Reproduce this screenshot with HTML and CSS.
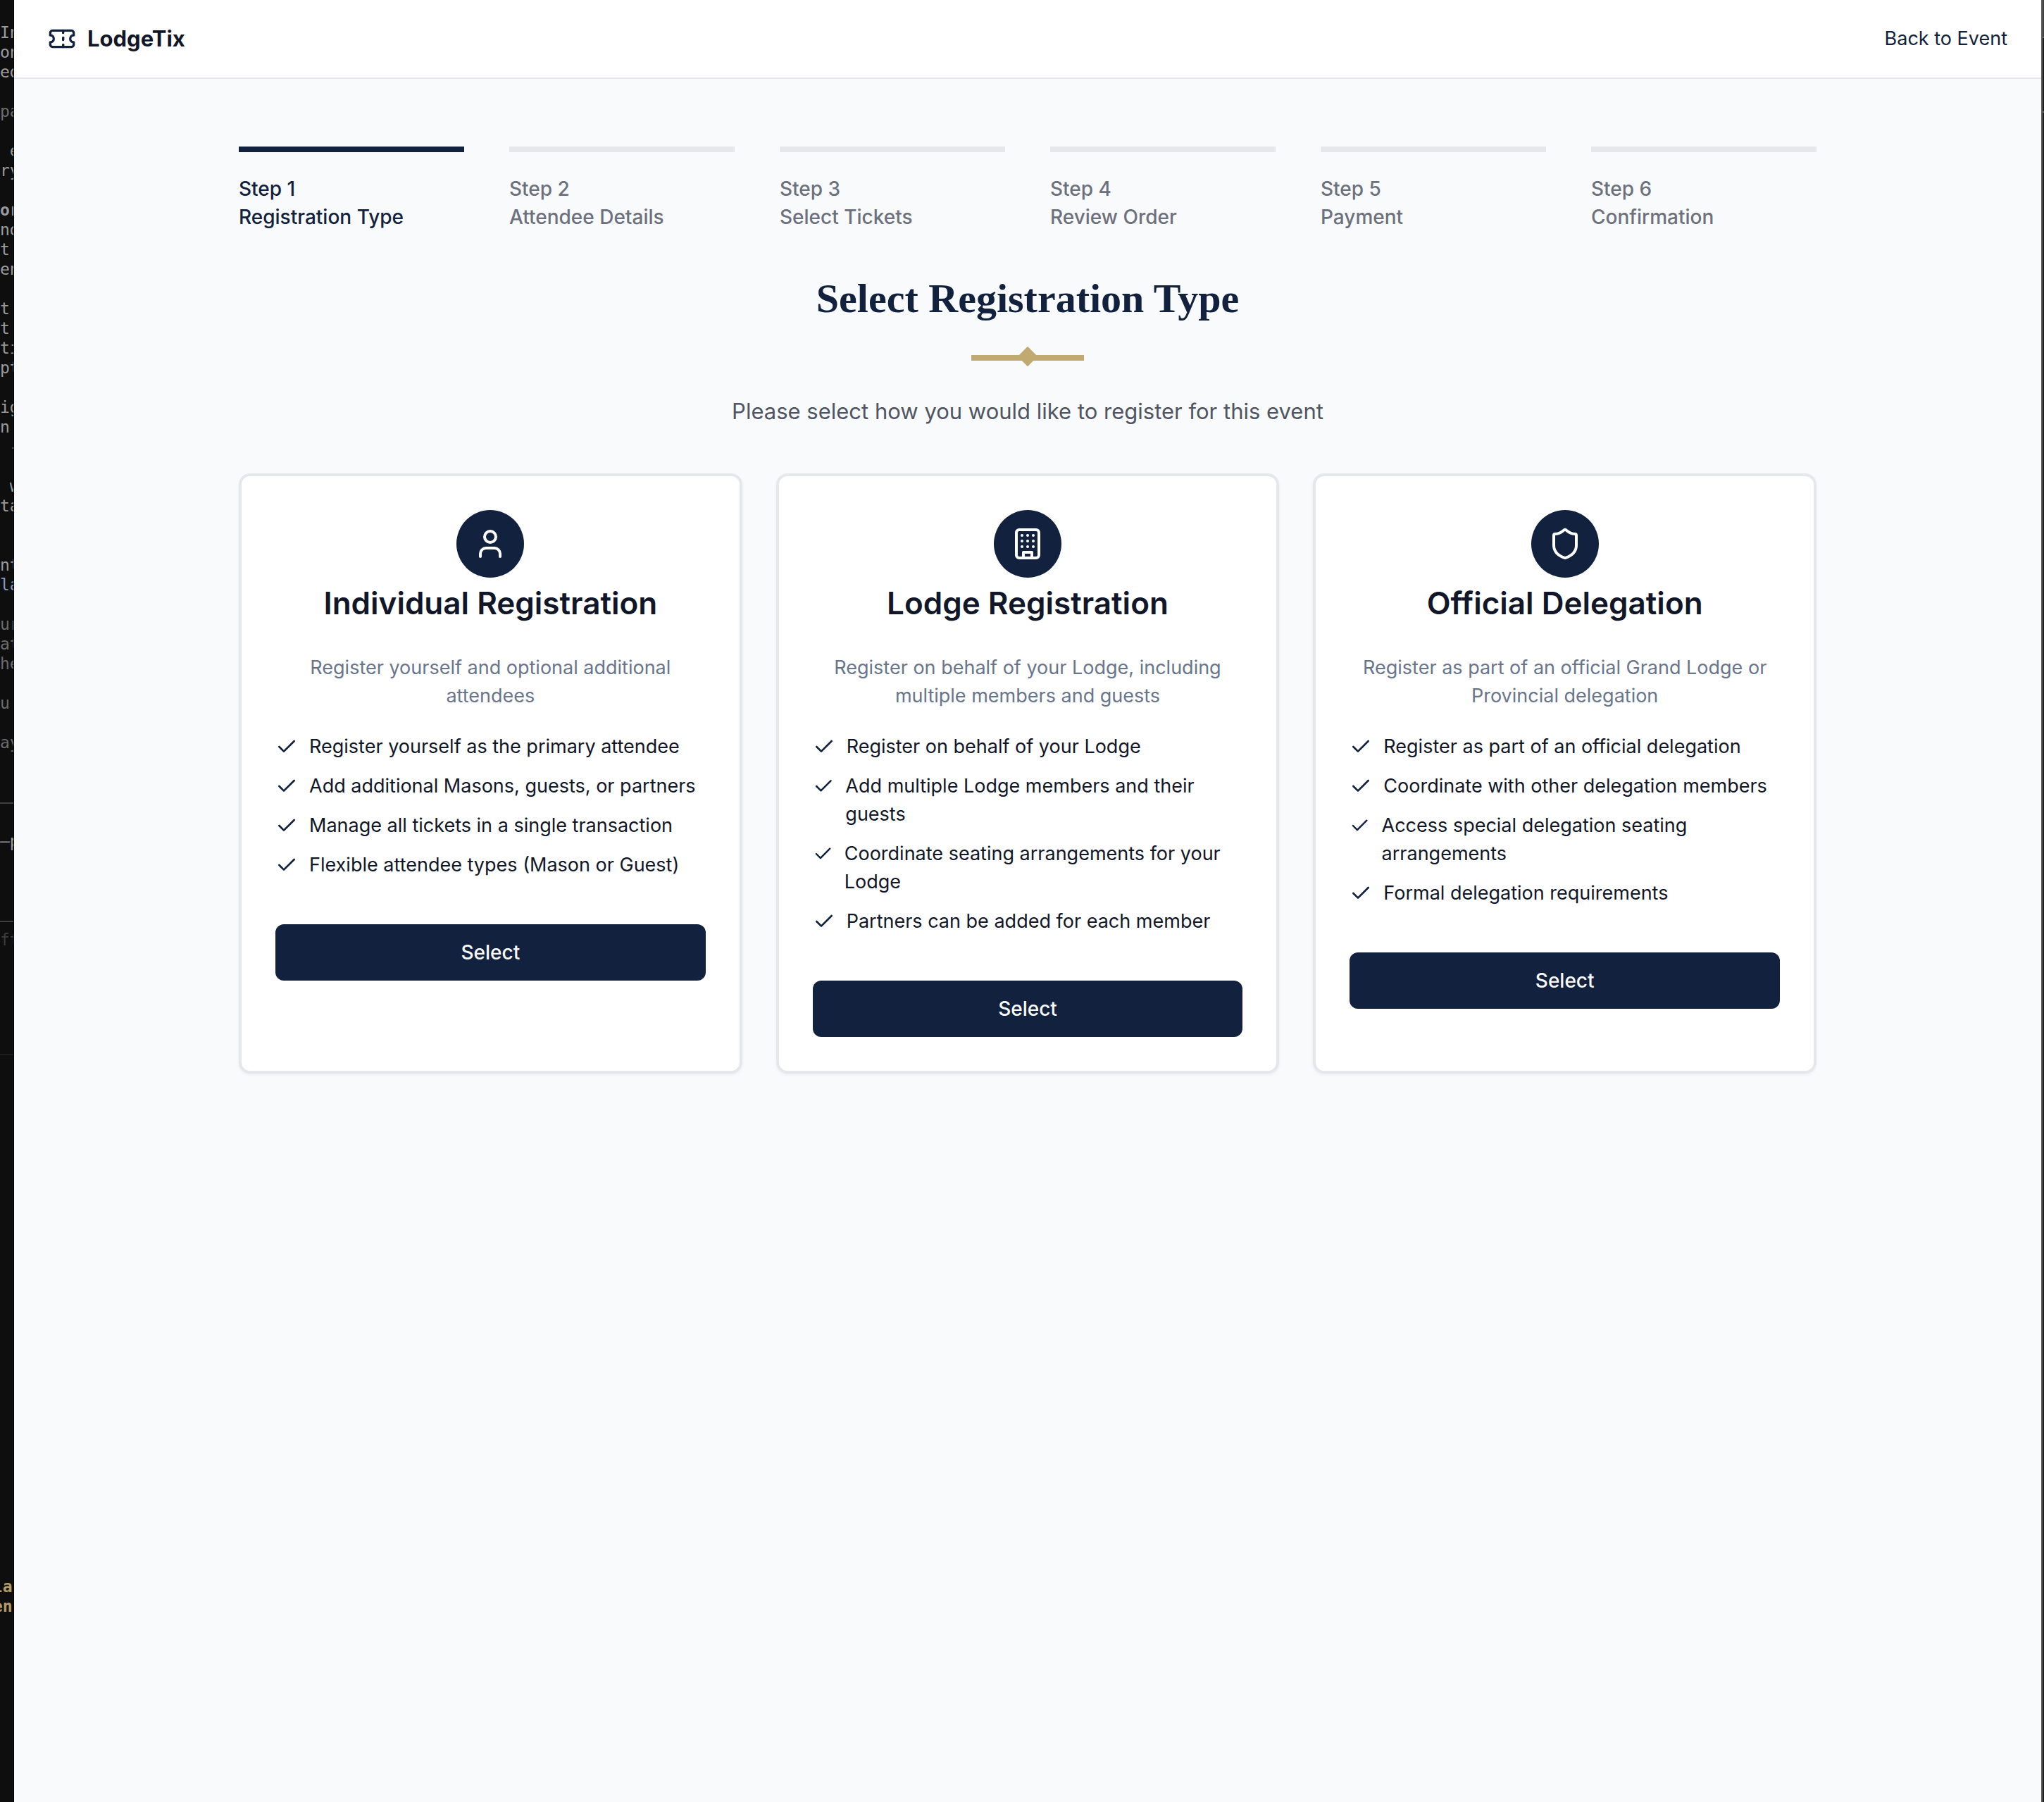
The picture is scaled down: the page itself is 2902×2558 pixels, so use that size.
FILE: index.html
```html
<!DOCTYPE html>
<html lang="en">
<head>
<meta charset="utf-8">
<meta name="viewport" content="width=device-width, initial-scale=1">
<title>LodgeTix - Select Registration Type</title>
<link rel="stylesheet" href="styles.css">
</head>
<body>
<div class="desktop">
  <aside class="terminal" aria-hidden="true">
    <pre class="terminal-text">
In
on
ed

<span class="dim">pa</span>

 e
ry

<b>or</b>
nd
t
en

t
t
ti
pt

ig
n
 -

 w
ta


nt
<span class="blue">la</span>

<span class="dim">ur</span>
<span class="dim">at</span>
<span class="dim">he</span>

<span class="dim">u</span>

<span class="dim">ay</span>


<span class="rule"></span>

—p



<span class="rule"></span>
<span class="faint">ft</span>
</pre>
    <pre class="terminal-status"><b>la</b>
<b>en</b></pre>
  </aside>

  <div class="window">
    <header class="topbar">
      <a class="brand" href="#">
        <svg class="icon brand-icon" viewBox="0 0 24 24" aria-hidden="true"><path d="M2 9a3 3 0 0 1 0 6v2a2 2 0 0 0 2 2h16a2 2 0 0 0 2-2v-2a3 3 0 0 1 0-6V7a2 2 0 0 0-2-2H4a2 2 0 0 0-2 2Z"/><path d="M13 5v2"/><path d="M13 17v2"/><path d="M13 11v2"/></svg>
        <span>LodgeTix</span>
      </a>
      <a class="back" href="#">Back to Event</a>
    </header>

    <main class="content">
      <nav aria-label="Progress">
        <ol class="steps">
          <li class="step step-current" aria-current="step"><span>Step 1</span><span>Registration Type</span></li>
          <li class="step"><span>Step 2</span><span>Attendee Details</span></li>
          <li class="step"><span>Step 3</span><span>Select Tickets</span></li>
          <li class="step"><span>Step 4</span><span>Review Order</span></li>
          <li class="step"><span>Step 5</span><span>Payment</span></li>
          <li class="step"><span>Step 6</span><span>Confirmation</span></li>
        </ol>
      </nav>

      <div class="intro">
        <h1 class="title">Select Registration Type</h1>
        <div class="divider"></div>
        <p class="subtitle">Please select how you would like to register for this event</p>
      </div>

      <div class="cards">
        <section class="card">
          <div class="badge"><svg class="icon badge-icon" viewBox="0 0 24 24" aria-hidden="true"><path d="M19 21v-2a4 4 0 0 0-4-4H9a4 4 0 0 0-4 4v2"/><circle cx="12" cy="7" r="4"/></svg></div>
          <h2 class="card-title">Individual Registration</h2>
          <p class="card-text">Register yourself and optional additional attendees</p>
          <ul class="features">
            <li><svg class="icon check" viewBox="0 0 24 24" aria-hidden="true"><path d="M20 6 9 17l-5-5"/></svg><span>Register yourself as the primary attendee</span></li>
            <li><svg class="icon check" viewBox="0 0 24 24" aria-hidden="true"><path d="M20 6 9 17l-5-5"/></svg><span>Add additional Masons, guests, or partners</span></li>
            <li><svg class="icon check" viewBox="0 0 24 24" aria-hidden="true"><path d="M20 6 9 17l-5-5"/></svg><span>Manage all tickets in a single transaction</span></li>
            <li><svg class="icon check" viewBox="0 0 24 24" aria-hidden="true"><path d="M20 6 9 17l-5-5"/></svg><span>Flexible attendee types (Mason or Guest)</span></li>
          </ul>
          <button class="select" type="button">Select</button>
        </section>

        <section class="card">
          <div class="badge"><svg class="icon badge-icon" viewBox="0 0 24 24" aria-hidden="true"><rect width="16" height="20" x="4" y="2" rx="2" ry="2"/><path d="M9 22v-4h6v4"/><path d="M8 6h.01"/><path d="M16 6h.01"/><path d="M12 6h.01"/><path d="M12 10h.01"/><path d="M12 14h.01"/><path d="M16 10h.01"/><path d="M16 14h.01"/><path d="M8 10h.01"/><path d="M8 14h.01"/></svg></div>
          <h2 class="card-title">Lodge Registration</h2>
          <p class="card-text">Register on behalf of your Lodge, including multiple members and guests</p>
          <ul class="features">
            <li><svg class="icon check" viewBox="0 0 24 24" aria-hidden="true"><path d="M20 6 9 17l-5-5"/></svg><span>Register on behalf of your Lodge</span></li>
            <li><svg class="icon check" viewBox="0 0 24 24" aria-hidden="true"><path d="M20 6 9 17l-5-5"/></svg><span>Add multiple Lodge members and their guests</span></li>
            <li><svg class="icon check" viewBox="0 0 24 24" aria-hidden="true"><path d="M20 6 9 17l-5-5"/></svg><span>Coordinate seating arrangements for your Lodge</span></li>
            <li><svg class="icon check" viewBox="0 0 24 24" aria-hidden="true"><path d="M20 6 9 17l-5-5"/></svg><span>Partners can be added for each member</span></li>
          </ul>
          <button class="select" type="button">Select</button>
        </section>

        <section class="card">
          <div class="badge"><svg class="icon badge-icon" viewBox="0 0 24 24" aria-hidden="true"><path d="M20 13c0 5-3.5 7.500-7.660 8.950a1 1 0 0 1-.67-.01C7.500 20.500 4 18 4 13V6a1 1 0 0 1 1-1c2 0 4.500-1.200 6.240-2.720a1.170 1.170 0 0 1 1.520 0C14.510 3.810 17 5 19 5a1 1 0 0 1 1 1z"/></svg></div>
          <h2 class="card-title">Official Delegation</h2>
          <p class="card-text">Register as part of an official Grand Lodge or Provincial delegation</p>
          <ul class="features">
            <li><svg class="icon check" viewBox="0 0 24 24" aria-hidden="true"><path d="M20 6 9 17l-5-5"/></svg><span>Register as part of an official delegation</span></li>
            <li><svg class="icon check" viewBox="0 0 24 24" aria-hidden="true"><path d="M20 6 9 17l-5-5"/></svg><span>Coordinate with other delegation members</span></li>
            <li><svg class="icon check" viewBox="0 0 24 24" aria-hidden="true"><path d="M20 6 9 17l-5-5"/></svg><span>Access special delegation seating arrangements</span></li>
            <li><svg class="icon check" viewBox="0 0 24 24" aria-hidden="true"><path d="M20 6 9 17l-5-5"/></svg><span>Formal delegation requirements</span></li>
          </ul>
          <button class="select" type="button">Select</button>
        </section>
      </div>
    </main>
  </div>
</div>
</body>
</html>
```

FILE: styles.css
```css
:root {
  --navy: #12213d;
  --ink: #111628;
  --muted: #69758c;
  --gray: #6d717e;
  --line: #e5e7eb;
  --page: #f9fafc;
  --gold: #c1a972;
}

* {
  box-sizing: border-box;
}

body {
  margin: 0;
  background: #0e0e0e;
  color: var(--ink);
  font-family: Inter, "Liberation Sans", sans-serif;
  font-size: 27px;
  line-height: 40px;
}

h1, h2, p, ol, ul {
  margin: 0;
  padding: 0;
}

ol, ul {
  list-style: none;
}

a {
  color: inherit;
  text-decoration: none;
}

/* The gradient shows as the window edge behind, right of the browser */
.desktop {
  display: flex;
  min-height: 100vh;
  background: linear-gradient(#404040 52px, #666 52px 54px, #1e1e1e 54px 158px, #666 158px 160px, #1e1e1e 160px);
}

/* Sliver of the terminal behind the browser window */
.terminal {
  flex: none;
  width: 20px;
  height: 100vh;
  overflow: hidden;
  background: #0e0e0e;
  border-right: 1px solid #000;
  font-size: 23px;
  line-height: 28px;
}

.terminal-text,
.terminal-status {
  margin: 0;
  font-family: "DejaVu Sans Mono", monospace;
  font-size: 23px;
  line-height: 28px;
}

.terminal-text {
  padding-top: 32px;
  color: #9a9a9a;
}

.terminal-status {
  margin: 148px 0 0 -10px;
  padding-top: 740px;
  border-top: 2px solid #1c1c1c;
  color: #b09a68;
}

.dim {
  color: #6c6c6c;
}

.faint {
  color: #3c3c3c;
}

.blue {
  color: #8298bd;
}

.rule {
  display: inline-block;
  width: 20px;
  height: 2px;
  background: #404040;
  vertical-align: middle;
}

.window {
  flex: 1;
  min-width: 0;
  margin-right: 2px;
  background: var(--page);
  border-right: 2px solid #5c5c5c;
}

.topbar {
  display: flex;
  align-items: center;
  justify-content: space-between;
  height: 112px;
  padding: 0 48px;
  background: #fff;
  border-bottom: 2px solid #e2e7f0;
}

.brand {
  display: flex;
  align-items: center;
  gap: 16px;
  font-size: 31px;
  font-weight: 700;
}

.back {
  color: var(--navy);
}

.icon {
  fill: none;
  stroke: currentColor;
  stroke-width: 2;
  stroke-linecap: round;
  stroke-linejoin: round;
}

.brand-icon {
  width: 40px;
  height: 40px;
  color: var(--navy);
}

.content {
  max-width: 2304px;
  margin: 0 auto;
  padding: 96px 32px;
}

.steps {
  display: grid;
  grid-template-columns: repeat(6, 1fr);
  gap: 64px;
}

.step {
  display: flex;
  flex-direction: column;
  padding-top: 32px;
  border-top: 8px solid var(--line);
  color: var(--gray);
  font-size: 28px;
  font-weight: 500;
}

.step-current {
  border-color: var(--navy);
  color: var(--navy);
}

.intro {
  display: flex;
  flex-direction: column;
  align-items: center;
  gap: 48px;
  padding: 64px 0;
  text-align: center;
}

.title {
  color: var(--navy);
  font-family: Georgia, "Liberation Serif", serif;
  font-size: 58px;
  font-weight: 700;
  line-height: 64px;
}

.divider {
  position: relative;
  width: 160px;
  height: 8px;
  background: var(--gold);
}

.divider::before {
  content: "";
  position: absolute;
  top: -8px;
  left: 70px;
  width: 20px;
  height: 20px;
  background: var(--gold);
  transform: rotate(45deg);
}

.subtitle {
  color: #4f5562;
  font-size: 31px;
  line-height: 48px;
}

.cards {
  display: grid;
  grid-template-columns: repeat(3, 1fr);
  gap: 48px;
}

.card {
  padding: 48px;
  background: #fff;
  border: 4px solid var(--line);
  border-radius: 16px;
  box-shadow: 0 2px 4px rgba(0, 0, 0, 0.05);
}

.badge {
  display: grid;
  place-items: center;
  width: 96px;
  height: 96px;
  margin: 0 auto 12px;
  border-radius: 50%;
  background: var(--navy);
  color: #fff;
}

.badge-icon {
  width: 48px;
  height: 48px;
}

.card-title {
  font-size: 44px;
  font-weight: 600;
  line-height: 48px;
  text-align: center;
}

.card-text {
  margin: 48px 0 32px;
  color: var(--muted);
  text-align: center;
}

.features {
  display: grid;
  gap: 16px;
}

.features li {
  display: flex;
  align-items: flex-start;
}

.check {
  width: 32px;
  height: 32px;
  margin: 4px 16px 0 0;
  color: var(--navy);
}

.select {
  width: 100%;
  height: 80px;
  margin-top: 64px;
  padding: 0;
  border: 0;
  border-radius: 12px;
  background: var(--navy);
  color: #fafafa;
  font: inherit;
  font-size: 28px;
  font-weight: 500;
}
```
